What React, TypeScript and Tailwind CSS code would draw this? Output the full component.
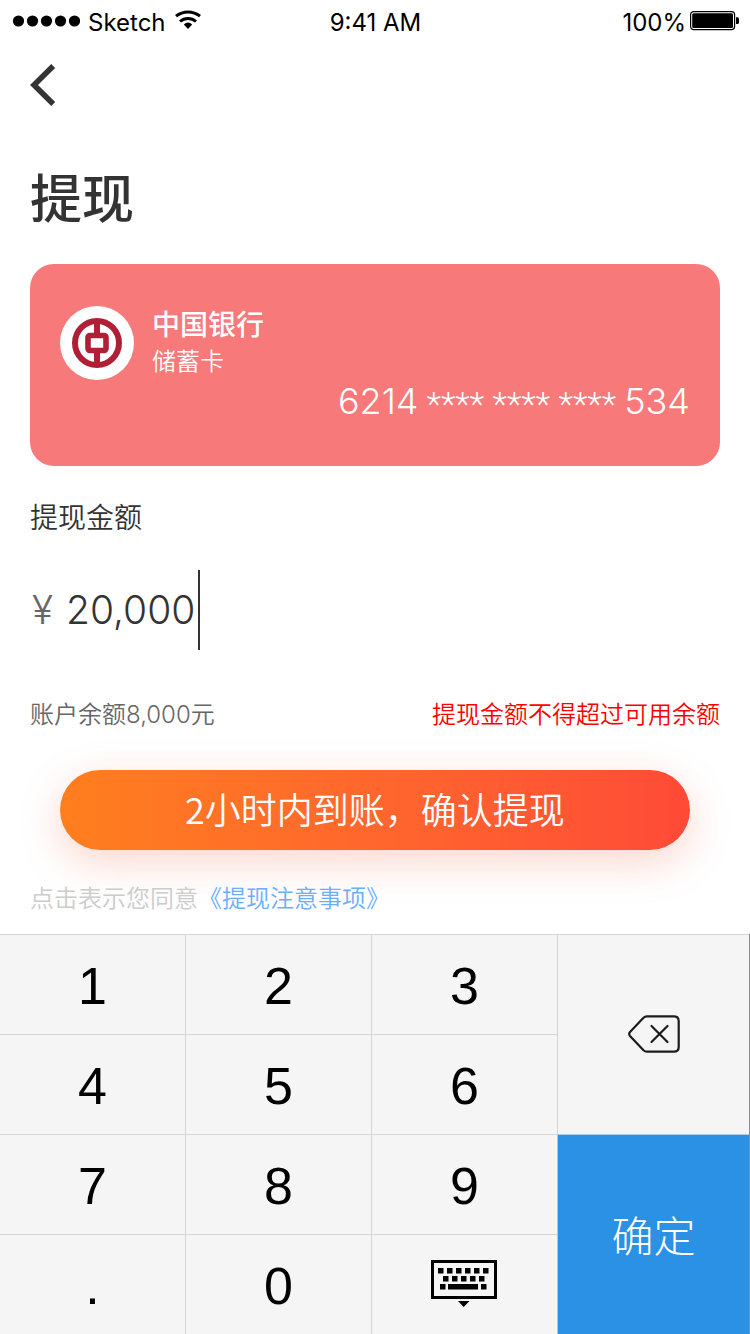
import { useState } from "react";

const KEYS = ["1", "2", "3", "4", "5", "6", "7", "8", "9", ".", "0"];

const keyClass =
  "flex items-center justify-center border-t border-l border-[#d6d6d8] bg-[#f5f5f5] text-[52px] leading-none text-black";

function StatusBar() {
  return (
    <header className="grid h-10 grid-cols-3 items-center pt-1.5 pr-[11px] pl-3 font-['Inter',sans-serif] text-2xl leading-8 text-black">
      <div className="flex items-center gap-2">
        <svg width="68" height="12" viewBox="0 0 68 12" className="mb-1" aria-hidden="true">
          {[6.5, 20.5, 34.5, 48.5, 62.5].map((x) => (
            <circle key={x} cx={x} cy="6" r="5.6" />
          ))}
        </svg>
        <span>Sketch</span>
        <svg width="28" height="20" viewBox="-1 0 28 20" className="mb-1.5" aria-hidden="true">
          <g fill="none" stroke="#000" strokeWidth="3">
            <path d="M1 6.200A19 19 0 0 1 25 6.200" />
            <path d="M5 11.500A12 12 0 0 1 21 11.500" />
          </g>
          <path d="M8.800 14.600Q13 10.200 17.200 14.600L13 19Z" />
        </svg>
      </div>
      <span className="text-center">9:41 AM</span>
      <div className="flex items-center justify-end gap-1">
        <span>100%</span>
        <svg width="49" height="20" viewBox="0 0 49 20" className="mb-1" aria-hidden="true">
          <rect x="0.6" y="0.6" width="44" height="18" rx="3" fill="none" stroke="#000" strokeWidth="1.2" />
          <rect x="2.2" y="2.2" width="40.8" height="14.8" rx="1.5" />
          <path d="M46 6.2h1.4q1.6 0 1.6 1.6v3.6q0 1.6-1.6 1.6H46Z" />
        </svg>
      </div>
    </header>
  );
}

function BankLogo() {
  return (
    <svg width="74" height="74" viewBox="0 0 74 74" className="shrink-0" aria-hidden="true">
      <circle cx="37" cy="37" r="37" fill="#fff" />
      <g fill="none" stroke="#b01f36">
        <circle cx="37" cy="37" r="22" strokeWidth="6" />
        <path d="M37 13v15M37 46v15" strokeWidth="6" />
        <rect x="28" y="29.500" width="18" height="15" rx="2" strokeWidth="5.600" strokeLinejoin="round" />
      </g>
    </svg>
  );
}

function Keypad() {
  return (
    <section
      aria-label="数字键盘"
      className="grid auto-rows-[100px] grid-cols-[185fr_186fr_186fr_192fr] border-r border-[#8e8e90] font-['Liberation_Sans',Arial,sans-serif]"
    >
      {KEYS.slice(0, 3).map((k) => (
        <button key={k} type="button" className={keyClass + " pt-0.5 first:border-l-0"}>
          {k}
        </button>
      ))}
      <button type="button" aria-label="删除" className={keyClass + " row-span-2 pb-0.5"}>
        <svg width="52" height="38" viewBox="0 0 52 38" fill="none" stroke="#1c1c1e" strokeWidth="2.2" strokeLinecap="round" strokeLinejoin="round" aria-hidden="true">
          <path d="M19 1.3H46Q50.700 1.300 50.700 6V32Q50.700 36.700 46 36.700H19Q17 36.700 15.500 35.200L2 21Q0.400 19 2 17L15.500 2.800Q17 1.300 19 1.300Z" />
          <path d="M23.500 11L39.500 27M39.500 11L23.500 27" />
        </svg>
      </button>
      {KEYS.slice(3, 6).map((k) => (
        <button key={k} type="button" className={keyClass + " pt-0.5 nth-[5]:border-l-0"}>
          {k}
        </button>
      ))}
      {KEYS.slice(6, 9).map((k) => (
        <button key={k} type="button" className={keyClass + " pt-0.5 nth-[8]:border-l-0"}>
          {k}
        </button>
      ))}
      <button
        type="button"
        className="row-span-2 flex items-center justify-center border-t border-l border-[#a9cdec] bg-[#2b91e4] pb-0.5 font-['Noto_Sans_CJK_SC',sans-serif] text-[42px] leading-none font-light text-white"
      >
        确定
      </button>
      {KEYS.slice(9).map((k) => (
        <button key={k} type="button" className={keyClass + " pt-0.5 nth-[12]:border-l-0"}>
          {k}
        </button>
      ))}
      <button type="button" aria-label="收起键盘" className={keyClass + " pr-0.5 pb-0.5"}>
        <svg width="66" height="48" viewBox="0 0 66 48" aria-hidden="true">
          <rect x="1.500" y="1.500" width="63" height="36" fill="none" stroke="#000" strokeWidth="3" />
          {[7, 16, 25, 34, 43, 52].map((x) => (
            <rect key={x} x={x} y="8" width="5.500" height="5.500" />
          ))}
          {[12, 21, 30, 39, 48].map((x) => (
            <rect key={x} x={x} y="16" width="5.500" height="5.500" />
          ))}
          <path d="M9 24h5.500v5.500H9zM17 24h30v5.500H17zM50 24h5.500v5.500H50zM27 41h11.500L32.700 47Z" />
        </svg>
      </button>
    </section>
  );
}

export default function App() {
  const [amount, setAmount] = useState("20,000");

  return (
    <div className="flex min-h-screen flex-col bg-white font-['Noto_Sans_CJK_SC',sans-serif] text-[#333333]">
      <StatusBar />
      <nav className="flex h-[90px] items-center px-[30px]">
        <button type="button" aria-label="返回">
          <svg width="26" height="42" viewBox="0 0 26 42" fill="none" stroke="#333" strokeWidth="5.600" aria-hidden="true">
            <path d="M23.200 2L4 21L23.200 40" />
          </svg>
        </button>
      </nav>

      <main className="flex grow flex-col px-[30px] pt-[30px]">
        <h1 className="text-[52px] leading-[72px] font-medium">提现</h1>

        <section className="mt-8 flex h-[202px] flex-col rounded-3xl bg-[#f77979] px-[30px] pt-[42px] text-white">
          <div className="flex items-center gap-[18px]">
            <BankLogo />
            <div>
              <h2 className="text-[28px] leading-[34px] font-medium">中国银行</h2>
              <p className="text-2xl leading-10 font-[350]">储蓄卡</p>
            </div>
          </div>
          <p className="flex items-center justify-end gap-2 font-['Inter',sans-serif] text-4xl leading-9 font-light">
            <span>6214</span>
            <span className="pt-1.5 font-['Roboto',sans-serif] text-[34px] leading-9">**** **** ****</span>
            <span>534</span>
          </p>
        </section>

        <form className="flex flex-col" onSubmit={(e) => e.preventDefault()}>
          <label htmlFor="amount" className="mt-[30px] text-[28px] leading-10 font-[350]">
            提现金额
          </label>
          <div className="mt-[34px] flex h-20 items-center font-['Inter',Arial,sans-serif] text-[39px] font-light">
            <span className="w-9 pl-0.5 text-[#666666]">¥</span>
            <input
              id="amount"
              inputMode="decimal"
              value={amount}
              onChange={(e) => setAmount(e.target.value)}
              className="field-sizing-content bg-transparent caret-transparent outline-none"
            />
            <span className="ml-[3px] h-20 w-0.5 bg-[#333333]" />
          </div>

          <div className="mt-[45px] flex h-9 justify-between text-2xl leading-9 font-[350]">
            <p className="text-[#666666]">
              账户余额<span className="font-['Inter',Arial,sans-serif] font-light">8,000</span>元
            </p>
            <p className="text-[#ff0000]">提现金额不得超过可用余额</p>
          </div>

          <button
            type="submit"
            className="mx-[30px] mt-[39px] h-20 rounded-full bg-linear-to-r from-[#ff7e1d] to-[#ff4a37] pb-1 text-4xl font-[350] text-white shadow-[0_12px_40px_rgba(240,90,50,0.25)]"
          >
            2小时内到账，确认提现
          </button>
        </form>

        <p className="relative mt-[29px] pb-[19px] text-2xl leading-9 font-[350] text-[#cccccc]">
          点击表示您同意
          <a href="#terms" className="text-[#6aaeff]">
            《提现注意事项》
          </a>
        </p>
      </main>

      <Keypad />
    </div>
  );
}
